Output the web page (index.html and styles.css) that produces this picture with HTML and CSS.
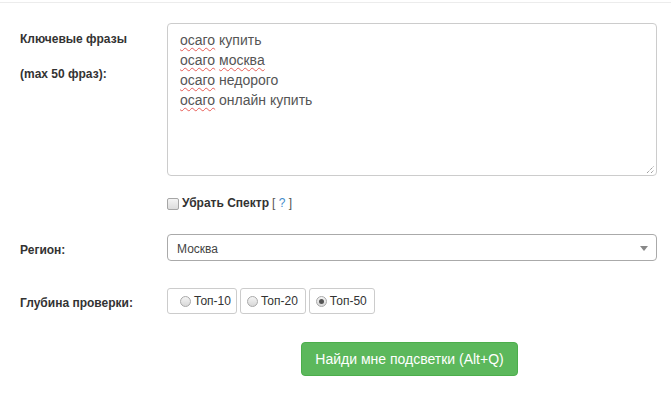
FILE: index.html
```html
<!DOCTYPE html>
<html lang="ru">
<head>
    <meta charset="UTF-8">
    <title>Подсветки</title>
    <link rel="stylesheet" href="styles.css">
</head>
<body>

<div class="page">
    <div class="row row--phrases">
        <div class="lbl lbl--phrases">Ключевые фразы<br><br>(max 50 фраз):</div>
        <div class="ctl">
            <div class="textbox">
                <div><span class="typo">осаго</span> купить</div>
                <div><span class="typo">осаго</span> <span class="typo">москва</span></div>
                <div><span class="typo">осаго</span> недорого</div>
                <div><span class="typo">осаго</span> онлайн купить</div>
                <svg class="grip" width="9" height="9" viewBox="0 0 9 9">
                    <path d="M1 8 L8 1 M5 8 L8 5" stroke="#777" stroke-width="1" stroke-dasharray="1 1"/>
                </svg>
            </div>
        </div>
    </div>

    <div class="row row--check">
        <div class="lbl"></div>
        <div class="ctl check">
            <span class="checkbox"></span>
            <b>Убрать Спектр</b> <span class="hint">[ <a href="#">?</a> ]</span>
        </div>
    </div>

    <div class="row row--region">
        <div class="lbl lbl--region">Регион:</div>
        <div class="ctl">
            <div class="select">Москва<span class="caret"></span></div>
        </div>
    </div>

    <div class="row row--depth">
        <div class="lbl lbl--depth">Глубина проверки:</div>
        <div class="ctl radios">
            <label class="radio radio--first"><span class="dot"></span>Топ-10</label>
            <label class="radio"><span class="dot"></span>Топ-20</label>
            <label class="radio"><span class="dot dot--on"></span>Топ-50</label>
        </div>
    </div>

    <div class="row row--submit">
        <div class="lbl"></div>
        <div class="ctl">
            <button class="btn">Найди мне подсветки (Alt+Q)</button>
        </div>
    </div>
</div>

</body>
</html>
```

FILE: styles.css
```css
* {
    margin: 0;
    padding: 0;
    box-sizing: border-box;
}

body {
    background: #fff;
    font-family: "Liberation Sans", Arial, sans-serif;
    font-size: 12px;
    color: #333;
    padding-top: 2px;
}

.page {
    border-top: 1px solid #ececec;
    padding-bottom: 20px;
}

.row {
    display: grid;
    grid-template-columns: 147px 490px;
    padding-left: 20px;
}

.lbl {
    font-weight: bold;
    line-height: 17px;
}

.row--phrases {
    margin-top: 20px;
}

.lbl--phrases {
    padding-top: 8px;
    line-height: 17.5px;
}

.textbox {
    position: relative;
    height: 153px;
    border: 1px solid #ccc;
    border-radius: 4px;
    padding: 6px 12px;
    font-size: 14px;
    line-height: 20px;
    color: #555;
}

.typo {
    text-decoration: underline wavy rgba(224, 48, 42, 0.75);
    text-decoration-thickness: 1px;
    text-underline-offset: 2px;
}

.grip {
    position: absolute;
    right: 1px;
    bottom: 1px;
}

.row--check {
    margin-top: 19px;
}

.check {
    display: flex;
    align-items: center;
    line-height: 17px;
}

.check b {
    margin-right: 3px;
}

.checkbox {
    width: 12px;
    height: 12px;
    margin-right: 3px;
    border: 1px solid #a6a6a6;
    border-radius: 2px;
    background: linear-gradient(#f4f4f4, #dcdcdc);
}

.hint {
    color: #555;
}

.hint a {
    color: #428bca;
    text-decoration: none;
}

.row--region {
    margin-top: 22px;
}

.lbl--region {
    padding-top: 8px;
}

.select {
    position: relative;
    height: 27px;
    border: 1px solid #aaa;
    border-radius: 4px;
    padding: 2px 0 0 9px;
    line-height: 25px;
    color: #444;
}

.caret {
    position: absolute;
    right: 8px;
    top: 11px;
    border-left: 4px solid transparent;
    border-right: 4px solid transparent;
    border-top: 5px solid #888;
}

.row--depth {
    margin-top: 27px;
}

.lbl--depth {
    padding-top: 7px;
}

.radios {
    display: flex;
    gap: 3px;
}

.radio {
    display: flex;
    align-items: center;
    height: 26px;
    padding: 0 7px 0 6px;
    border: 1px solid #ccc;
    border-radius: 3px;
    font-size: 12px;
    color: #333;
}

.radio--first {
    padding: 0 5px 0 12px;
}

.dot {
    position: relative;
    width: 11px;
    height: 11px;
    margin-right: 3px;
    border: 1px solid #a9a9a9;
    border-radius: 50%;
    background: linear-gradient(#f4f4f4, #d8d8d8);
}

.dot--on::after {
    content: "";
    position: absolute;
    left: 2px;
    top: 2px;
    width: 5px;
    height: 5px;
    border-radius: 50%;
    background: #555;
}

.row--submit {
    margin-top: 28px;
}

.btn {
    margin-left: 134px;
    width: 217px;
    height: 34px;
    border: 1px solid #4cae4c;
    border-radius: 4px;
    background: #5cb85c;
    color: #fff;
    font-family: "Liberation Sans", Arial, sans-serif;
    font-size: 14px;
    cursor: pointer;
}
```
